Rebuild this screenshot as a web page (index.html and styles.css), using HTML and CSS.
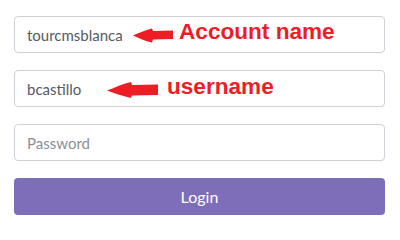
FILE: index.html
```html
<!DOCTYPE html>
<html>
<head>
<meta charset="utf-8">
<link rel="stylesheet" href="styles.css">
</head>
<body>
<form class="login">
  <div class="field">
    <input class="input" type="text" value="tourcmsblanca">
    <svg class="arrow arrow-1" width="40" height="15" viewBox="0 0 40 15"><path d="M0 7.5 C6 5 12 2 19 0.5 L20 3 L40 2.5 L40 11 L20 11.5 L19 14.5 C12 13 6 10 0 7.5 Z" fill="#ee1c25"/></svg>
    <span class="note note-1">Account name</span>
  </div>
  <div class="field">
    <input class="input" type="text" value="bcastillo">
    <svg class="arrow arrow-2" width="51" height="16" viewBox="0 0 51 16"><path d="M0 8.5 C7 6 15 2 24 0 L25 3 L51 2.5 L51 13 L25 13.5 L24 16 C15 14 7 11 0 8.5 Z" fill="#ee1c25"/></svg>
    <span class="note note-2">username</span>
  </div>
  <div class="field">
    <input class="input" type="password" placeholder="Password">
  </div>
  <button class="btn" type="button">Login</button>
</form>
</body>
</html>
```
FILE: styles.css
```css
html, body {
  margin: 0;
  padding: 0;
  background: #ffffff;
}
.login {
  display: flex;
  flex-direction: column;
  gap: 17px;
  width: 371px;
  padding: 16px 0 0 14px;
  font-family: Lato, "Open Sans", sans-serif;
}
.field {
  position: relative;
}
.input {
  display: block;
  box-sizing: border-box;
  width: 100%;
  height: 37px;
  margin: 0;
  padding: 0 12px;
  border: 1px solid #cdd1d8;
  border-radius: 4px;
  background: #fff;
  font-family: Lato, "Open Sans", sans-serif;
  font-size: 15px;
  color: #555a63;
  outline: none;
}
.input::placeholder {
  color: #8a8f98;
}
.btn {
  display: block;
  box-sizing: border-box;
  width: 100%;
  height: 37px;
  margin: 0;
  border: 0;
  border-radius: 4px;
  background: #7e6db8;
  color: #fff;
  font-family: Lato, "Open Sans", sans-serif;
  font-size: 16px;
}
.arrow {
  position: absolute;
  display: block;
}
.arrow-1 {
  left: 119px;
  top: 12px;
}
.arrow-2 {
  left: 93px;
  top: 12px;
}
.note {
  position: absolute;
  font-family: "Liberation Sans", Arial, sans-serif;
  font-weight: bold;
  font-size: 22.6px;
  line-height: 1;
  color: #ee1c25;
  white-space: nowrap;
}
.note-1 {
  left: 165px;
  top: 5px;
}
.note-2 {
  left: 153px;
  top: 6px;
}
```
